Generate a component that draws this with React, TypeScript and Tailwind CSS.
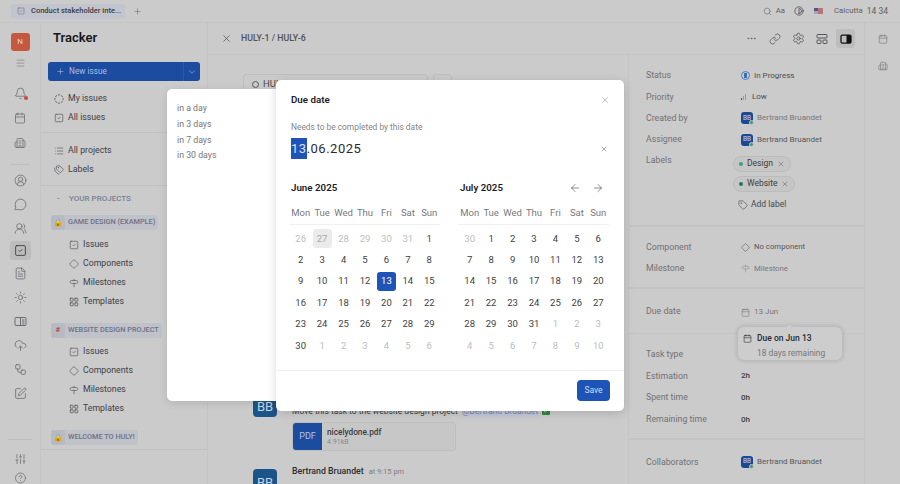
import type { ReactNode } from 'react';
import {
	ArrowLeft, ArrowRight, Bell, Building2, Calendar, CircleDashed, CircleUserRound, CloudUpload, Contrast, Diamond,
	Ellipsis, FileText, LayoutGrid, Link, List, Menu, MessageCircle, Plus, Search, Settings, Signpost,
	SlidersVertical, SquareCheck, SquarePen, Sun, Tag, Tags, UsersRound, Workflow, X, ChevronDown, CircleHelp, Check,
} from 'lucide-react';

const june = [
	[26, 27, 28, 29, 30, 31, 1],
	[2, 3, 4, 5, 6, 7, 8],
	[9, 10, 11, 12, 13, 14, 15],
	[16, 17, 18, 19, 20, 21, 22],
	[23, 24, 25, 26, 27, 28, 29],
	[30, 1, 2, 3, 4, 5, 6],
];

const july = [
	[30, 1, 2, 3, 4, 5, 6],
	[7, 8, 9, 10, 11, 12, 13],
	[14, 15, 16, 17, 18, 19, 20],
	[21, 22, 23, 24, 25, 26, 27],
	[28, 29, 30, 31, 1, 2, 3],
	[4, 5, 6, 7, 8, 9, 10],
];

const weekdays = ['Mon', 'Tue', 'Wed', 'Thu', 'Fri', 'Sat', 'Sun'];

function Month({ title, weeks, isJune, nav }: { title: string; weeks: number[][]; isJune?: boolean; nav?: boolean }) {
	return (
		<div className="w-[150px]">
			<div className="flex h-[16px] items-center justify-between pl-[1px]">
				<span className="text-[9.75px] font-semibold text-[#1c1c1e]">{title}</span>
				{nav && (
					<div className="flex gap-[11px] pr-[5px] text-[#4a4a4e]">
						<ArrowLeft size={12} strokeWidth={1.25} />
						<ArrowRight size={12} strokeWidth={1.25} />
					</div>
				)}
			</div>
			<div className="mt-[9px] grid grid-cols-7 border-b border-[#f0f0f0] pb-[3px]">
				{weekdays.map((d) => (
					<span key={d} className="h-[16px] text-center text-[9.5px] leading-[16px] text-[#77777b]">
						{d}
					</span>
				))}
			</div>
			<div className="mt-[3px] grid grid-cols-7">
				{weeks.flat().map((n, i) => {
					const muted = i < 7 ? n > 20 : i > 27 && n < 15;
					const selected = isJune && i === 18;
					const today = isJune && i === 1;
					return (
						<div key={i} className="flex h-[21.4px] items-center justify-center">
							<span
								className={`flex h-[19px] w-[19px] items-center justify-center rounded-[3px] text-[9.5px] ${
									selected ? 'bg-[#1e54b7] text-white' : today ? 'bg-[#ebebeb] text-[#a8a8a8]' : muted ? 'text-[#bdbdbd]' : 'text-[#3e3e42]'
								}`}
							>
								{n}
							</span>
						</div>
					);
				})}
			</div>
		</div>
	);
}

function NavItem({ icon, label, sub }: { icon: ReactNode; label: string; sub?: boolean }) {
	return (
		<div className={`flex h-[19px] items-center gap-[4px] text-[8.75px] text-[#3f4045] ${sub ? 'pl-[27px]' : 'pl-[12px]'}`}>
			<span className="flex w-[11px] justify-center text-[#4d4e53]">{icon}</span>
			<span>{label}</span>
		</div>
	);
}

function ProjectGroup({ glyph, label, items }: { glyph: ReactNode; label: string; items?: boolean }) {
	return (
		<div>
			<div className="ml-[10px] flex h-[15px] w-max items-center rounded-[3px] bg-[#c0c2c9] pr-[3px]">
				<span className="flex h-[15px] w-[14px] items-center justify-center rounded-[3px] bg-[#b8bac2] text-[8px]">{glyph}</span>
				<span className="ml-[3px] text-[7.3px] font-medium whitespace-nowrap text-[#6d7188]">{label}</span>
			</div>
			{items && (
				<div className="mt-[5px]">
					<NavItem sub icon={<SquareCheck size={10} strokeWidth={1.5} />} label="Issues" />
					<NavItem sub icon={<Diamond size={10} strokeWidth={1.5} />} label="Components" />
					<NavItem sub icon={<Signpost size={10} strokeWidth={1.5} />} label="Milestones" />
					<NavItem sub icon={<LayoutGrid size={10} strokeWidth={1.75} />} label="Templates" />
				</div>
			)}
		</div>
	);
}

function Avatar() {
	return (
		<span className="relative flex h-[12px] w-[12px] items-center justify-center rounded-[3px] bg-[#1b4a94] text-[6.5px] text-[#c8d4ec]">
			BB
			<span className="absolute -right-[1px] -bottom-[1px] h-[5px] w-[5px] rounded-full border border-[#cbcbcb] bg-[#3f9a6a]" />
		</span>
	);
}

function Prop({ label, children, h = 21.4 }: { label: string; children?: ReactNode; h?: number }) {
	return (
		<div className="flex items-center pl-[17px] text-[8.75px]" style={{ height: h }}>
			<span className="w-[95px] text-[#717176]">{label}</span>
			<div className="flex items-center gap-[4px] text-[8px] text-[#55565a]">{children}</div>
		</div>
	);
}

function Chip({ label, color }: { label: string; color: string }) {
	return (
		<div className="-ml-[8px] flex h-[16px] w-max items-center gap-[4px] rounded-full border border-[#bcbcbc] bg-[#c6c6c6] px-[5px] text-[8.5px] text-[#3b3c40]">
			<span className={`h-[4px] w-[4px] rounded-full ${color}`} />
			{label}
			<X size={8} strokeWidth={1.5} className="text-[#5c5c60]" />
		</div>
	);
}

export default function App() {
	return (
		<div className="relative h-[484px] w-[900px] overflow-hidden bg-[#cbcbcb] font-['Roboto','Noto_Sans',sans-serif]">
			{/* top bar */}
			<div className="flex h-[23px] items-center border-b border-[#c4c4c4] pl-[11px]">
				<div className="flex h-[15px] w-[114px] items-center gap-[6px] rounded-[3px] bg-[#c2c5ce] pl-[6px] text-[7.5px] font-medium whitespace-nowrap text-[#3b3c42]">
					<SquareCheck size={8} strokeWidth={1.5} className="shrink-0 text-[#60626a]" />
					<span>Conduct stakeholder inte...</span>
				</div>
				<Plus size={9} strokeWidth={1.5} className="ml-[8px] text-[#6b6c70]" />
				<div className="ml-auto flex items-center pr-[12px] text-[7.75px] text-[#5f6064]">
					<Search size={9} strokeWidth={1.5} />
					<span className="ml-[4px]">Aa</span>
					<Contrast size={10} strokeWidth={1.5} className="ml-[9px] text-[#2f2f32]" />
					<span className="ml-[10px] flex h-[6px] w-[9px] bg-[#a9a3b8]">
						<span className="h-[3px] w-[4px] bg-[#4b5a8c]" />
						<span className="h-[6px] w-[5px] bg-[#b8727a]" />
					</span>
					<span className="ml-[11px]">Calcutta</span>
					<span className="ml-[4px] text-[8.5px]">14 34</span>
				</div>
			</div>

			<div className="flex h-[461px]">
				{/* icon rail */}
				<div className="flex w-[41px] flex-col items-center border-r border-[#c4c4c4] text-[#6b6c72]">
					<span className="mt-[10px] flex h-[19px] w-[19px] items-center justify-center rounded-[3px] bg-[#c5583f] text-[8px] text-[#e6d5cf]">N</span>
					<Menu size={11} strokeWidth={1.25} className="mt-[7px]" />
					<div className="mt-[19px] flex flex-col items-center gap-[12.5px]">
						<span className="relative">
							<Bell size={13} strokeWidth={1.5} />
							<span className="absolute -right-[1px] bottom-0 h-[4px] w-[4px] rounded-full bg-[#c9483f]" />
						</span>
						<Calendar size={12} strokeWidth={1.5} />
						<Building2 size={12} strokeWidth={1.5} />
					</div>
					<div className="mt-[15px] h-px w-[20px] bg-[#bdbdbd]" />
					<div className="mt-[9px] flex flex-col items-center gap-[11px]">
						<CircleUserRound size={13} strokeWidth={1.5} />
						<MessageCircle size={13} strokeWidth={1.5} />
						<UsersRound size={13} strokeWidth={1.5} />
					</div>
					<span className="mt-[6px] flex h-[21px] w-[21px] items-center justify-center rounded-[3px] bg-[#bcbcbc] text-[#2f3034]">
						<SquareCheck size={13} strokeWidth={1.5} />
					</span>
					<div className="mt-[7px] flex flex-col items-center gap-[11px]">
						<FileText size={13} strokeWidth={1.5} />
						<Sun size={13} strokeWidth={1.5} />
						<svg width="13" height="13" viewBox="0 0 13 13" fill="none" stroke="currentColor" strokeWidth="1">
							<rect x="1" y="2.5" width="11" height="8" rx="1" />
							<path d="M6.5 2.5v8M8 5h2.5M8 7h2.5M8 9h2.5" />
						</svg>
						<CloudUpload size={13} strokeWidth={1.5} />
						<Workflow size={13} strokeWidth={1.5} />
						<SquarePen size={13} strokeWidth={1.5} />
					</div>
					<div className="mt-[39px] h-px w-[24px] bg-[#bdbdbd]" />
					<SlidersVertical size={13} strokeWidth={1.5} className="mt-[13px]" />
					<CircleHelp size={13} strokeWidth={1.5} className="mt-[7px]" />
				</div>

				{/* sidebar */}
				<div className="w-[167px] border-r border-[#c4c4c4]">
					<div className="flex h-[39px] items-end pb-[15px] pl-[12px] text-[13px] leading-[18px] font-semibold text-[#17171a]">Tracker</div>
					<div className="ml-[7px] flex h-[19px] w-[152px] items-center rounded-[3px] bg-[#1c4c9f] text-[8.25px] text-[#a9bfe3]">
						<Plus size={9} strokeWidth={1.5} className="ml-[8px]" />
						<span className="ml-[4px]">New issue</span>
						<span className="ml-auto flex h-full w-[17px] items-center justify-center border-l border-[#2a5aab]">
							<ChevronDown size={10} strokeWidth={1.5} />
						</span>
					</div>
					<div className="mt-[8px] border-b border-[#c0c0c0] pb-[5px]">
						<NavItem icon={<CircleDashed size={10} strokeWidth={1.75} />} label="My issues" />
						<NavItem icon={<SquareCheck size={10} strokeWidth={1.5} />} label="All issues" />
					</div>
					<div className="mt-[8px] border-b border-[#c0c0c0] pb-[6px]">
						<NavItem icon={<List size={10} strokeWidth={1.5} />} label="All projects" />
						<NavItem icon={<Tags size={10} strokeWidth={1.5} />} label="Labels" />
					</div>
					<div className="flex h-[25px] items-center pl-[16px] text-[8px] font-medium text-[#7c7f90]">
						<span className="w-[11px]">-</span>
						<span className="ml-[1px]">YOUR PROJECTS</span>
					</div>
					<div className="mt-[4px] flex flex-col gap-[11.5px]">
						<ProjectGroup glyph="🔒" label="GAME DESIGN (EXAMPLE)" items />
						<ProjectGroup glyph={<span className="font-semibold text-[#b34444]">#</span>} label="WEBSITE DESIGN PROJECT" items />
						<ProjectGroup glyph="🔒" label="WELCOME TO HULY!" />
					</div>
					<div className="mt-[4px] h-px bg-[#c0c0c0]" />
				</div>

				{/* main area */}
				<div className="flex min-w-0 flex-1">
					<div className="flex w-[657px] shrink-0 flex-col border-r border-[#c4c4c4]">
						<div className="flex h-[32px] shrink-0 items-center border-b border-[#c4c4c4] pr-[9px] pl-[13px]">
							<X size={11} strokeWidth={1.5} className="text-[#46474b]" />
							<span className="ml-[9px] text-[8.75px] font-medium text-[#505156]">HULY-1 / HULY-6</span>
							<div className="ml-auto flex items-center text-[#55565a]">
								<Ellipsis size={11} strokeWidth={1.5} />
								<Link size={12} strokeWidth={1.5} className="ml-[12px]" />
								<Settings size={13} strokeWidth={1.5} className="ml-[11px]" />
								<svg width="12" height="12" viewBox="0 0 12 12" fill="none" stroke="currentColor" strokeWidth="1" className="ml-[11px]">
									<rect x="1" y="1.5" width="10" height="3.5" rx="0.75" />
									<rect x="1" y="7" width="4" height="3.5" rx="0.75" />
									<rect x="7" y="7" width="4" height="3.5" rx="0.75" />
								</svg>
								<span className="ml-[8px] flex h-[19px] w-[19px] items-center justify-center rounded-[3px] bg-[#bdbdbd]">
									<svg width="12" height="12" viewBox="0 0 12 12" fill="none">
										<rect x="1" y="2" width="10" height="8" rx="1.25" stroke="#111" strokeWidth="1.25" />
										<rect x="6.5" y="2" width="4.5" height="8" fill="#111" />
									</svg>
								</span>
							</div>
						</div>
						<div className="flex min-h-0 flex-1">
							{/* activity */}
							<div className="w-[420px] shrink-0 pl-[35px]">
								<div className="mt-[19px] flex gap-[5px]">
									<div className="flex h-[20px] w-[185px] items-center gap-[4px] rounded-[3px] border border-[#bebebe] pl-[8px] text-[9.5px] text-[#4a4b4f]">
										<span className="h-[7px] w-[7px] rounded-full border border-[#57585c]" />
										HULY
									</div>
									<div className="h-[20px] w-[19px] rounded-[3px] border border-[#bebebe]" />
								</div>
								<div className="mt-[299px] flex gap-[15px] pl-[10px]">
									<span className="flex h-[24px] w-[24px] shrink-0 items-end justify-center rounded-[4px] bg-[#1b5488] pb-[1px] text-[13px] leading-[18px] text-[#c9d6e6]">BB</span>
									<div className="pt-[11px]">
										<div className="flex h-[14px] items-center gap-[4px] text-[8.5px] whitespace-nowrap text-[#3d3e42]">
											Move this task to the website design project
											<span className="rounded-[2px] bg-[#c3c8d8] text-[#7a86ad]">@Bertrand Bruandet</span>
											<span className="flex h-[8px] w-[8px] items-center justify-center rounded-[1px] bg-[#2d8a3a] text-white">
												<Check size={6} />
											</span>
										</div>
										<div className="mt-[4px] flex h-[29px] w-[164px] items-center rounded-[3px] border border-[#bebebe] bg-[#c7c7c7]">
											<span className="flex h-full w-[29px] items-center justify-center rounded-l-[3px] bg-[#1c4c9f] text-[9px] text-[#b3c5e6]">PDF</span>
											<div className="ml-[5px]">
												<div className="text-[8.25px] leading-[12px] font-medium text-[#3a3b40]">nicelydone.pdf</div>
												<div className="text-[7px] leading-[9px] text-[#88888c]">4.91kB</div>
											</div>
										</div>
									</div>
								</div>
								<div className="mt-[18px] flex gap-[15px] pl-[10px]">
									<span className="flex h-[24px] w-[24px] shrink-0 items-end justify-center rounded-[4px] bg-[#1b5488] pb-[1px] text-[13px] leading-[18px] text-[#c9d6e6]">BB</span>
									<div className="-mt-[4px] flex h-[14px] items-center gap-[5px] text-[8.75px]">
										<span className="font-medium text-[#2a2b2f]">Bertrand Bruandet</span>
										<span className="text-[7.5px] text-[#7e7e82]">at 9:15 pm</span>
									</div>
								</div>
							</div>

							{/* properties */}
							<div className="flex-1 border-l border-[#c4c4c4] pt-[10px]">
								<Prop label="Status">
									<span className="flex h-[9px] w-[9px] items-center justify-center rounded-full border border-[#4a7fc0]">
										<span className="h-[5px] w-[3px] bg-[#3a70b6]" />
									</span>
									<span className="text-[#4b4c50]">In Progress</span>
								</Prop>
								<Prop label="Priority">
									<span className="flex items-end gap-[1px]">
										<span className="h-[2px] w-[1px] bg-[#444]" />
										<span className="h-[4px] w-[1px] bg-[#999]" />
										<span className="h-[6px] w-[1px] bg-[#999]" />
									</span>
									<span className="ml-[2px] text-[#4b4c50]">Low</span>
								</Prop>
								<Prop label="Created by">
									<Avatar />
									<span className="text-[#77777b]">Bertrand Bruandet</span>
								</Prop>
								<Prop label="Assignee">
									<Avatar />
									<span>Bertrand Bruandet</span>
								</Prop>
								<div className="flex border-b-2 border-[#c4c4c4] pb-[12px] pl-[17px] text-[8.75px]">
									<span className="w-[95px] pt-[3px] text-[#717176]">Labels</span>
									<div className="pt-[5px]">
										<Chip label="Design" color="bg-[#3f9e86]" />
										<div className="mt-[4px]">
											<Chip label="Website" color="bg-[#1e7a62]" />
										</div>
										<div className="mt-[5px] -ml-[3px] flex h-[16px] items-center gap-[3px] text-[8.5px] text-[#47484c]">
											<Tag size={10} strokeWidth={1.5} />
											Add label
										</div>
									</div>
								</div>
								<div className="border-b-2 border-[#c4c4c4] pt-[10px] pb-[8px]">
									<Prop label="Component">
										<Diamond size={9} strokeWidth={1.5} />
										<span className="text-[7.75px]">No component</span>
									</Prop>
									<Prop label="Milestone">
										<Signpost size={9} strokeWidth={1.5} className="text-[#8a8a8e]" />
										<span className="text-[7.75px] text-[#77777b]">Milestone</span>
									</Prop>
								</div>
								<div className="border-b border-[#c4c4c4] pt-[12px] pb-[10px]">
									<Prop label="Due date">
										<Calendar size={9} strokeWidth={1.5} className="text-[#77777b]" />
										<span className="text-[#77777b]">13 Jun</span>
									</Prop>
								</div>
								<div className="border-b-2 border-[#c4c4c4] pt-[10px] pb-[8px]">
									<Prop h={21.7} label="Task type" />
									<Prop h={21.7} label="Estimation"><span className="font-medium text-[#3d3e42]">2h</span></Prop>
									<Prop h={21.7} label="Spent time"><span className="font-medium text-[#3d3e42]">0h</span></Prop>
									<Prop h={21.7} label="Remaining time"><span className="font-medium text-[#3d3e42]">0h</span></Prop>
								</div>
								<div className="py-[11px]">
									<Prop label="Collaborators">
										<Avatar />
										<span>Bertrand Bruandet</span>
									</Prop>
								</div>
							</div>
						</div>
					</div>

					{/* right rail */}
					<div className="flex flex-1 flex-col items-center pt-[11px] text-[#77777b]">
						<Calendar size={10} strokeWidth={1.5} />
						<Building2 size={10} strokeWidth={1.5} className="mt-[17px]" />
					</div>
				</div>
			</div>

			{/* tooltip over due date */}
			<div className="absolute top-[326px] left-[737px] h-[35px] w-[106px] rounded-[7px] border border-[#bdbdbd] bg-[#cdcdcd] shadow-[0_0_4px_rgba(0,0,0,0.15)]">
				<span className="absolute -top-[3px] left-[49px] h-[5px] w-[5px] rotate-45 border-t border-l border-[#bdbdbd] bg-[#cdcdcd]" />
				<div className="flex h-[19px] items-center gap-[5px] pt-[3px] pl-[5px] text-[8.5px] font-medium text-[#2a2b2f]">
					<Calendar size={9} strokeWidth={1.5} />
					Due on Jun 13
				</div>
				<div className="mt-[1px] pl-[19px] text-[8.4px] text-[#77777b]">18 days remaining</div>
			</div>

			{/* shortcuts popup */}
			<div className="absolute top-[89px] left-[167px] h-[312px] w-[115px] rounded-l-[5px] bg-white pt-[12px] pl-[10px] text-[8.75px] leading-[15.8px] text-[#77777b] shadow-[0_2px_8px_rgba(0,0,0,0.12)]">
				<div>in a day</div>
				<div>in 3 days</div>
				<div>in 7 days</div>
				<div>in 30 days</div>
			</div>

			{/* due date dialog */}
			<div className="absolute top-[80px] left-[276px] h-[331px] w-[348px] rounded-[5px] bg-white shadow-[0_2px_10px_rgba(0,0,0,0.15)]">
				<div className="flex h-[40px] items-center justify-between pr-[14px] pl-[15px]">
					<span className="text-[9.75px] font-semibold text-[#1c1c1e]">Due date</span>
					<X size={10} strokeWidth={1.25} className="text-[#8a8a8e]" />
				</div>
				<div className="pl-[15px] text-[8.4px] leading-[14px] text-[#85858a]">Needs to be completed by this date</div>
				<div className="mt-[4px] flex items-center justify-between pr-[16px] pl-[15px]">
					<div className="flex h-[21px] items-center text-[13px] tracking-[0.5px] text-[#2a2b2f]">
						<span className="flex h-[21px] items-center bg-[#1e54b7] text-[#d7e3f7]">13</span>
						.06.2025
					</div>
					<X size={8} strokeWidth={1.5} className="text-[#55565a]" />
				</div>
				<div className="mt-[21px] flex gap-[19px] pl-[14px]">
					<Month title="June 2025" weeks={june} isJune />
					<Month title="July 2025" weeks={july} nav />
				</div>
				<div className="mt-[14px] flex h-[41px] items-start justify-end border-t border-[#f0f0f0] pt-[9px] pr-[14px]">
					<button className="flex h-[21px] w-[33px] items-center justify-center rounded-[4px] bg-[#1e54b7] text-[8.5px] text-[#cfdcf3]">Save</button>
				</div>
			</div>
		</div>
	);
}
